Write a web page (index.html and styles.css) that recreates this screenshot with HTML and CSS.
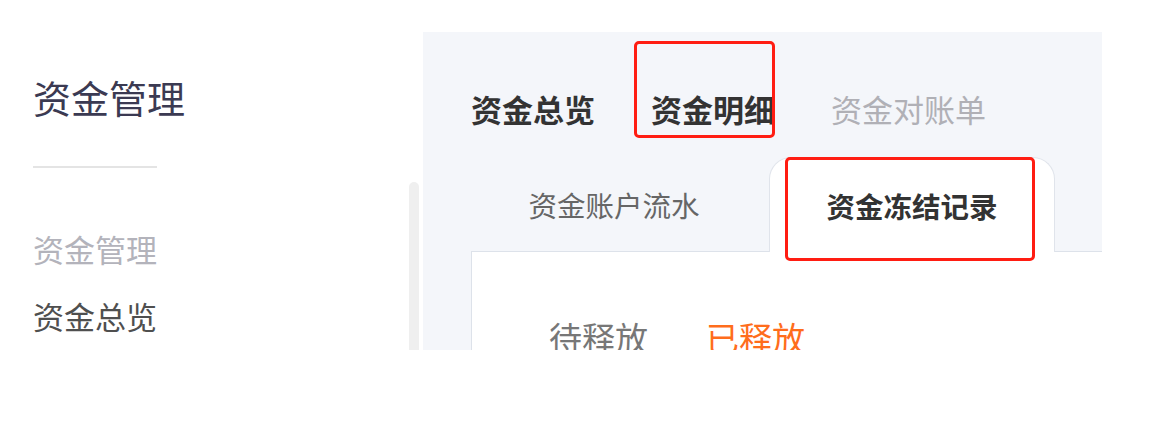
FILE: index.html
```html
<!DOCTYPE html>
<html lang="zh-CN">
<head>
  <meta charset="UTF-8" />
  <meta name="viewport" content="width=device-width, initial-scale=1" />
  <title>资金管理</title>
  <link rel="stylesheet" href="styles.css">
</head>
<body>
  <div class="page">
    <aside class="sidebar">
      <div class="side-nav">
        <h1 class="side-title">资金管理</h1>
        <hr class="side-divider" />
        <p class="side-group">资金管理</p>
        <a class="side-link" href="#">资金总览</a>
      </div>
      <div class="scrollbar"></div>
    </aside>

    <main class="content">
      <nav class="top-tabs">
        <a class="top-tab" href="#">资金总览</a>
        <a class="top-tab marked" href="#">资金明细</a>
        <a class="top-tab muted" href="#">资金对账单</a>
      </nav>

      <div class="card-tabs">
        <a class="card-tab" href="#">资金账户流水</a>
        <a class="card-tab active" href="#">资金冻结记录</a>
      </div>

      <section class="panel">
        <div class="status-filter">
          <span class="status">待释放</span>
          <span class="status current">已释放</span>
        </div>
      </section>
    </main>
  </div>
</body>
</html>
```

FILE: styles.css
```css
* { box-sizing: border-box; margin: 0; padding: 0; }
body {
  font-family: "Noto Sans CJK SC", "Noto Sans", sans-serif;
  background: #fff;
  color: #333;
}
a { text-decoration: none; color: inherit; }

.page {
  display: flex;
  height: 350px;
  overflow: hidden;
}

/* barra lateral */
.sidebar {
  width: 423px;
  flex: none;
  display: flex;
  justify-content: space-between;
  padding-left: 33px;
}
.side-nav {
  display: flex;
  flex-direction: column;
  align-items: flex-start;
}
.side-title {
  margin-top: 78px;
  font-size: 38px;
  line-height: 38px;
  font-weight: 400;
  color: #3b3a52;
}
.side-divider {
  width: 124px;
  height: 2px;
  border: none;
  background: #e4e4e4;
  margin-top: 50px;
}
.side-group {
  margin-top: 65px;
  font-size: 31px;
  line-height: 31px;
  color: #b3b3bb;
}
.side-link {
  margin-top: 36px;
  font-size: 31px;
  line-height: 31px;
  color: #4f4f4f;
}
.scrollbar {
  width: 10px;
  margin-top: 182px;
  margin-right: 4px;
  background: #efefef;
  border-radius: 5px 5px 0 0;
}

/* area principal */
.content {
  width: 679px;
  flex: none;
  margin-top: 32px;
  background: #f4f6fa;
  overflow: hidden;
  padding-left: 48px;
}
.top-tabs {
  display: flex;
  gap: 56px;
  padding-top: 61px;
}
.top-tab {
  position: relative;
  font-size: 31px;
  line-height: 31px;
  font-weight: 700;
  color: #333;
}
.top-tab.muted {
  font-weight: 400;
  color: #b0b0b6;
}
.top-tab.marked::after {
  content: "";
  position: absolute;
  left: -17px;
  top: -52px;
  width: 135px;
  height: 91px;
  border: 3px solid #ff1d12;
  border-radius: 5px;
}

.card-tabs {
  display: flex;
  gap: 12px;
  margin-top: 33px;
  width: 1000px;
}
.card-tab {
  width: 286px;
  height: 94px;
  display: flex;
  align-items: center;
  justify-content: center;
  font-size: 28.5px;
  color: #666;
}
.card-tab.active {
  position: relative;
  background: #fff;
  border: 1px solid #e0e4eb;
  border-bottom: none;
  border-radius: 22px 22px 0 0;
  margin-bottom: -1px;
  height: 95px;
  font-weight: 700;
  color: #333;
  z-index: 1;
}
.card-tab.active::after {
  content: "";
  position: absolute;
  left: 15px;
  top: -1px;
  width: 244px;
  height: 98px;
  border: 3px solid #ff1d12;
  border-radius: 5px;
}

.panel {
  width: 1000px;
  height: 200px;
  background: #fff;
  border-top: 1px solid #dde2ea;
  border-left: 1px solid #dde2ea;
  padding: 69px 0 0 77px;
}
.status-filter {
  display: flex;
  gap: 58px;
}
.status {
  font-size: 33px;
  line-height: 33px;
  color: #777;
}
.status.current { color: #ff6d1c; }
```
